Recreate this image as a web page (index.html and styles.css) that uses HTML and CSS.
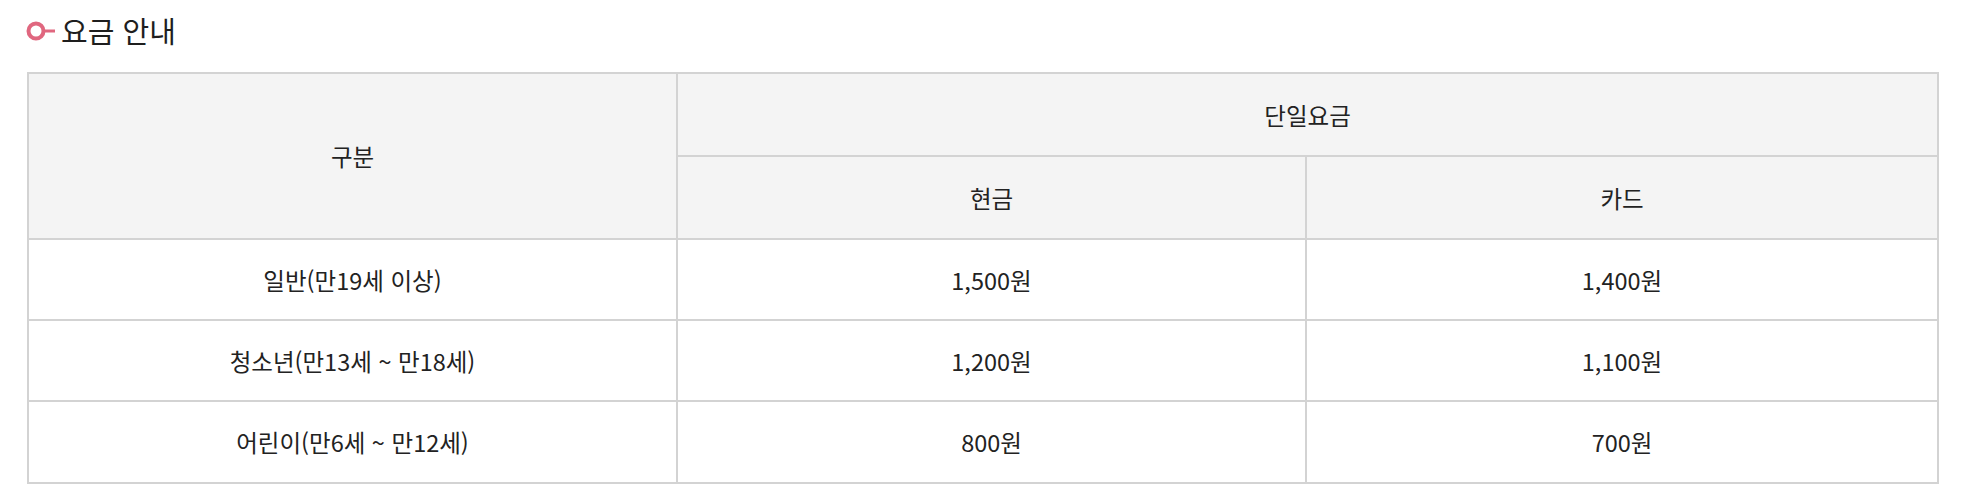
FILE: index.html
```html
<!DOCTYPE html>
<html lang="ko">
<head>
<meta charset="utf-8">
<link rel="stylesheet" href="styles.css">
</head>
<body>
<section class="fare">
  <h2 class="fare-title">
    <svg class="fare-icon" width="30" height="22" viewBox="0 0 30 22" aria-hidden="true">
      <circle cx="10" cy="11" r="7.5" fill="none" stroke="#e0677f" stroke-width="4"/>
      <line x1="17" y1="11" x2="29" y2="11" stroke="#e0677f" stroke-width="3"/>
    </svg>
    <span>요금 안내</span>
  </h2>
  <table class="fare-table">
    <colgroup>
      <col class="c1">
      <col class="c2">
      <col class="c3">
    </colgroup>
    <thead>
      <tr class="r1">
        <th rowspan="2">구분</th>
        <th colspan="2">단일요금</th>
      </tr>
      <tr class="r2">
        <th>현금</th>
        <th>카드</th>
      </tr>
    </thead>
    <tbody>
      <tr class="r3">
        <td>일반(만19세 이상)</td>
        <td>1,500원</td>
        <td>1,400원</td>
      </tr>
      <tr class="r4">
        <td>청소년(만13세 ~ 만18세)</td>
        <td>1,200원</td>
        <td>1,100원</td>
      </tr>
      <tr class="r5">
        <td>어린이(만6세 ~ 만12세)</td>
        <td>800원</td>
        <td>700원</td>
      </tr>
    </tbody>
  </table>
</section>
</body>
</html>
```

FILE: styles.css
```css
html, body {
  margin: 0;
  padding: 0;
  background: #ffffff;
}

body {
  font-family: "Noto Sans CJK KR", "Noto Sans", sans-serif;
  color: #222222;
}

.fare {
  padding: 12px 0 0 26px;
}

.fare-title {
  display: flex;
  align-items: center;
  gap: 5px;
  margin: 0;
  height: 36px;
  font-size: 29px;
  font-weight: 400;
  color: #1e1e1e;
}

.fare-icon {
  flex: none;
  margin-top: 1px;
}

.fare-table {
  margin-top: 24px;
  margin-left: 1px;
  width: 1910px;
  border-collapse: collapse;
  table-layout: fixed;
  border: 2px solid #d3d3d3;
  font-size: 23.5px;
}

.c1 { width: 649px; }
.c2 { width: 629px; }
.c3 { width: 632px; }

.fare-table th,
.fare-table td {
  border: 2px solid #d3d3d3;
  text-align: center;
  vertical-align: middle;
  font-weight: 400;
  padding: 0;
  color: #222222;
}

.fare-table th {
  background: #f4f4f4;
}

.r1 { height: 83px; }
.r2 { height: 83px; }
.r3 { height: 81px; }
.r4 { height: 81px; }
.r5 { height: 82px; }
```
